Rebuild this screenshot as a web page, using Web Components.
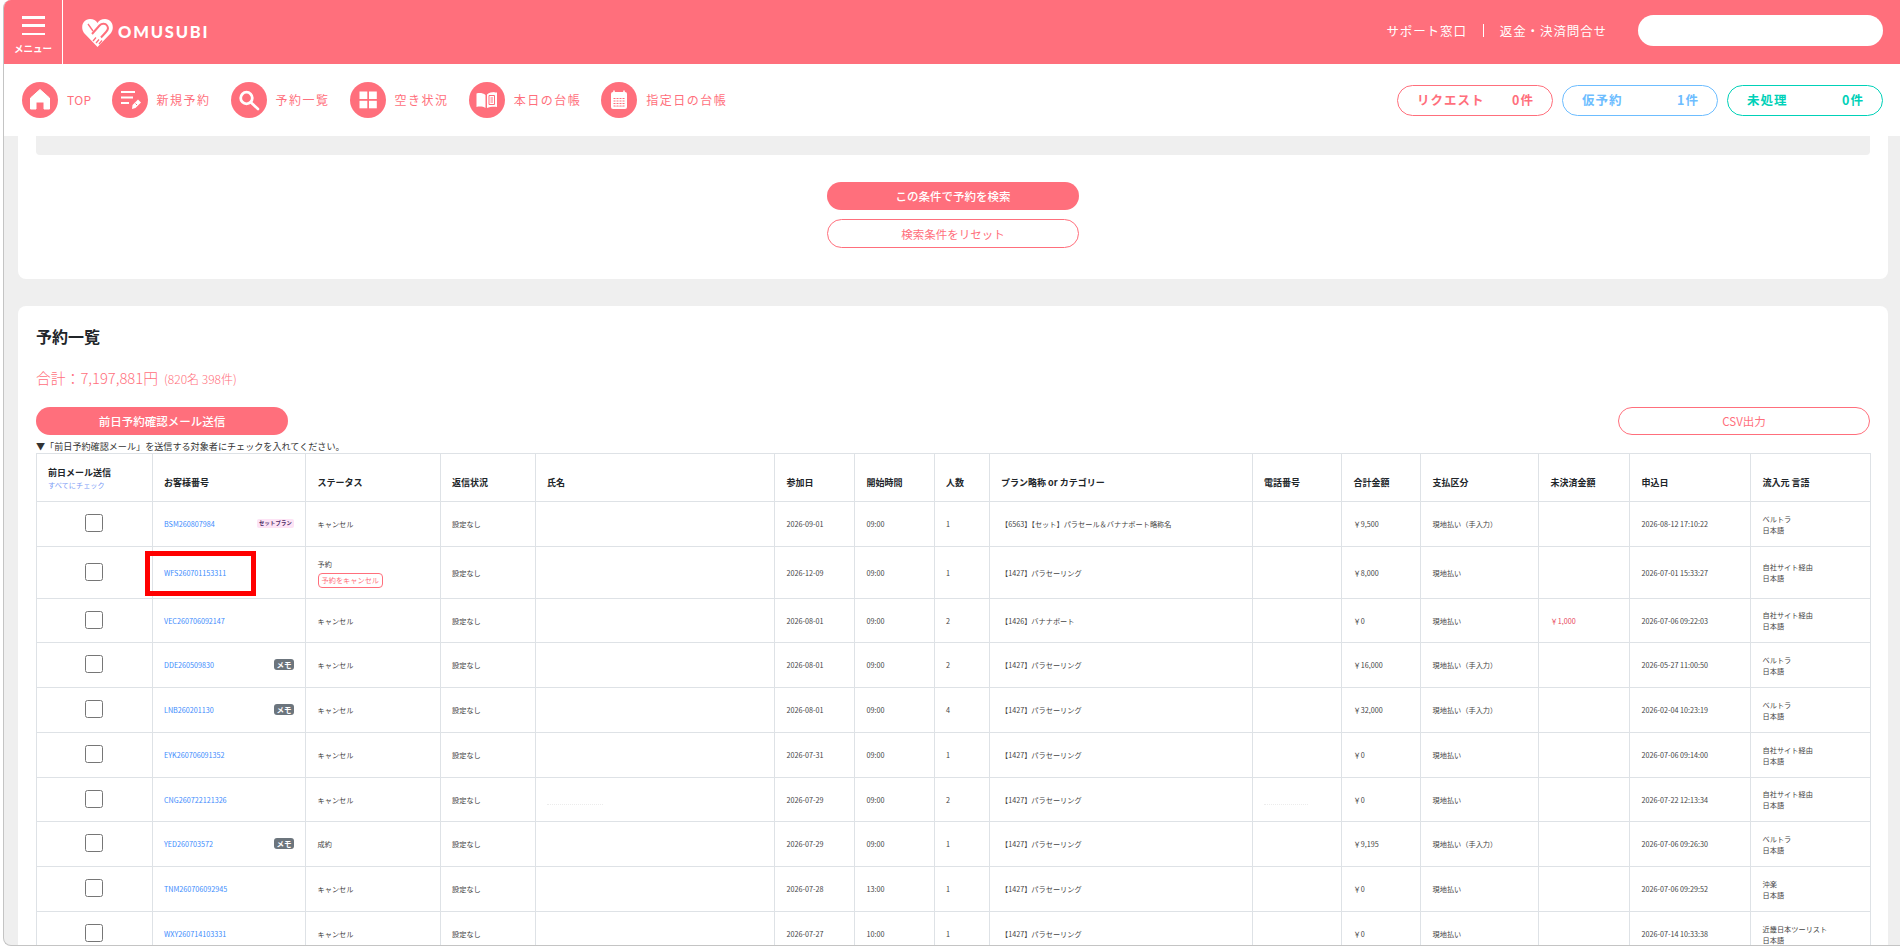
<!DOCTYPE html>
<html lang="ja">
<head>
<meta charset="utf-8">
<title>OMUSUBI</title>
<style>
  html, body { margin: 0; height: 949px; overflow: hidden; background: #fff; }
  body { font-family: "Noto Sans CJK JP", "Noto Sans", sans-serif; color: #212529; }
</style>
</head>
<body>
<app-window>
  <top-bar></top-bar>
  <nav-bar>
    <nav-item label="TOP" icon="home" tight></nav-item>
    <nav-item label="新規予約" icon="new"></nav-item>
    <nav-item label="予約一覧" icon="search"></nav-item>
    <nav-item label="空き状況" icon="grid"></nav-item>
    <nav-item label="本日の台帳" icon="book"></nav-item>
    <nav-item label="指定日の台帳" icon="calendar"></nav-item>
    <status-pill slot="pills" label="リクエスト" count="0件" color="#ff6f7c"></status-pill>
    <status-pill slot="pills" label="仮予約" count="1件" color="#6dbdff"></status-pill>
    <status-pill slot="pills" label="未処理" count="0件" color="#00d1b8"></status-pill>
  </nav-bar>
  <page-body>
    <search-card></search-card>
    <reservation-card></reservation-card>
  </page-body>
</app-window>

<script>
const PINK = '#ff6f7c';

// shorthand, every component here just sets its shadow html once
class Base extends HTMLElement {
  render(html) {
    let root = this.attachShadow({mode: 'open'});
    root.innerHTML = html;
    return root;
  }
}

class AppWindow extends Base {
  constructor() {
    super();
    this.render(`
      <style>
        :host {
          display: flex; flex-direction: column; box-sizing: border-box;
          margin-left: 3px; height: 946px; overflow: hidden;
          border-left: 1px solid #c4c4c4; border-bottom: 1px solid #c4c4c4;
          border-radius: 8px 0 0 8px; background: #efefef;
        }
      </style>
      <slot></slot>`);
  }
}
customElements.define('app-window', AppWindow);

class TopBar extends Base {
  constructor() {
    super();
    this.render(`
      <style>
        :host { display: flex; align-items: center; height: 64px; flex: none; background: ${PINK}; color: #fff; }
        .menu {
          box-sizing: border-box; width: 59px; height: 64px; border-right: 1px solid #fff;
          display: flex; flex-direction: column; align-items: center; padding-top: 16px;
        }
        .bars { width: 23px; height: 19px; display: flex; flex-direction: column; justify-content: space-between; }
        .bars i { display: block; height: 2.500px; background: #fff; }
        .menu b { font-size: 9.500px; line-height: 12px; margin-top: 7px; font-weight: 700; }
        .logo { display: flex; align-items: center; margin-left: 19px; gap: 5px; }
        .logo svg { display: block; }
        .logo span { font: 900 16.500px "Lato", sans-serif; letter-spacing: 1.800px; }
        .links { margin-left: auto; margin-bottom: 3px; display: flex; align-items: center; font-size: 12.500px; letter-spacing: .900px; }
        .links i { width: 1px; height: 13px; background: #fff; margin: 0 16px; }
        .search { width: 245px; height: 31px; border-radius: 16px; background: #fff; margin: 0 17px 3px 31px; }
      </style>
      <div class="menu">
        <div class="bars"><i></i><i></i><i></i></div>
        <b>メニュー</b>
      </div>
      <div class="logo">
        <svg width="31" height="29" viewBox="0 0 31 29">
          <path d="M15.500 29 2 15C-2 9 1 1 8 1c3.500 0 6 1.500 7.500 4C17 2.500 19.500 1 23 1c7 0 10 8 6 14Z" fill="#fff"/>
          <path d="M10 16 17.500 7.500c2.500-2.500 6-2 7.500 0 1.500 2 1 4.500-1 6.500l-5 5.500" fill="none" stroke="${PINK}" stroke-width="2"/>
          <path d="M6 6 11 13M14 25l3-3.500M17 26l3-3.500M11 23l3-3.500" fill="none" stroke="${PINK}" stroke-width="1.300"/>
        </svg>
        <span>OMUSUBI</span>
      </div>
      <div class="links">サポート窓口<i></i>返金・決済問合せ</div>
      <div class="search"></div>`);
  }
}
customElements.define('top-bar', TopBar);

const ICONS = {
  home: `<path d="M18 7.500 27.500 16v11H22v-7h-8v7H8.500V16Z" fill="#fff" stroke="#fff" stroke-width="1" stroke-linejoin="round"/>`,
  new: `<path d="M9 10h14M9 15.500h12M9 21h8" stroke="#fff" stroke-width="2.200" fill="none"/>
        <path d="M20 27l.500-4 5.500-5.500 3 3-5.500 5.500Z" fill="#fff"/>
        <path d="M23.500 21.500l1.500 1.500" stroke="${PINK}" stroke-width="1"/>`,
  search: `<circle cx="15.500" cy="16" r="5.800" fill="none" stroke="#fff" stroke-width="2.800"/>
        <path d="M20 20.500 27 27" stroke="#fff" stroke-width="2.600" stroke-linecap="round"/>`,
  grid: `<rect x="9.500" y="9.500" width="7.800" height="7.500" fill="#fff"/><rect x="19" y="9.500" width="7.800" height="7.500" fill="#fff"/>
        <rect x="9.500" y="18.800" width="7.800" height="7.500" fill="#fff"/><rect x="19" y="18.800" width="7.800" height="7.500" fill="#fff"/>`,
  book: `<path d="M7.500 11.500c3-.800 6.500-.500 9 1.500v13c-2.500-1.500-6-1.800-9-1Z" fill="#fff"/>
        <path d="M18 12.500c2-1.800 5-2.500 7.500-2.500v.500h2.500v14.500c-3.500-.500-7.500 0-10 1Z" fill="#fff"/>
        <path d="M20 13.500h5.500v9H20ZM21.500 16h2.500M21.500 18h2.500M21.500 20h2.500" fill="none" stroke="${PINK}" stroke-width="1"/>`,
  calendar: `<rect x="10" y="10" width="16" height="17" rx="2" fill="#fff"/>
        <path d="M13 8.500v3M23 8.500v3" stroke="#fff" stroke-width="1.600"/>
        <path d="M12.500 16.500h11M12.500 19h11M12.500 21.500h11M12.500 24h11" stroke="${PINK}" stroke-width="1"/>
        <path d="M15 16v8.500M18 16v8.500M21 16v8.500" stroke="#fff" stroke-width="1"/>`
};

class NavBar extends Base {
  constructor() {
    super();
    this.render(`
      <style>
        :host { display: flex; align-items: center; flex: none; height: 72px; background: #fff; padding: 0 17px 0 18px; gap: 20px; }
        .pills { margin-left: auto; display: flex; gap: 9px; }
      </style>
      <slot></slot>
      <div class="pills"><slot name="pills"></slot></div>`);
  }
}
customElements.define('nav-bar', NavBar);

class NavItem extends Base {
  constructor() {
    super();
    let label = this.getAttribute('label');
    let icon = ICONS[this.getAttribute('icon')];
    this.render(`
      <style>
        :host { display: flex; align-items: center; gap: 9px; color: ${PINK}; font-size: 12px; font-weight: 400; letter-spacing: 1.500px; }
        :host([tight]) { letter-spacing: .400px; }
        svg { display: block; flex: none; }
        span { margin-top: -2px; }
      </style>
      <svg width="36" height="36" viewBox="0 0 36 36"><circle cx="18" cy="18" r="18" fill="${PINK}"/>${icon}</svg>
      <span>${label}</span>`);
  }
}
customElements.define('nav-item', NavItem);

class StatusPill extends Base {
  constructor() {
    super();
    let c = this.getAttribute('color');
    this.render(`
      <style>
        :host {
          display: flex; align-items: center; justify-content: space-between; box-sizing: border-box;
          width: 156px; height: 31px; padding: 0 18px 2px 19px; border: 1px solid ${c}; border-radius: 16px;
          color: ${c}; font-size: 12.500px; font-weight: 700; letter-spacing: 1px;
        }
      </style>
      <span>${this.getAttribute('label')}</span><span>${this.getAttribute('count')}</span>`);
  }
}
customElements.define('status-pill', StatusPill);

class PageBody extends Base {
  constructor() {
    super();
    this.render(`
      <style>
        :host { display: flex; flex-direction: column; gap: 27px; flex: 1; min-height: 0; overflow: hidden; padding: 0 12px 0 14px; }
      </style>
      <slot></slot>`);
  }
}
customElements.define('page-body', PageBody);

class PillButton extends Base {
  constructor() {
    super();
    this.render(`
      <style>
        :host {
          display: flex; align-items: center; justify-content: center; box-sizing: border-box;
          width: 252px; height: 28px; border-radius: 15px; font-size: 11.500px;
          background: ${PINK}; color: #fff; font-weight: 500; flex: none;
        }
        :host([outline]) { background: #fff; color: ${PINK}; border: 1px solid ${PINK}; font-weight: 400; }
        :host([tall]) { height: 29px; }
      </style>
      <slot></slot>`);
  }
}
customElements.define('pill-button', PillButton);

class SearchCard extends Base {
  constructor() {
    super();
    this.render(`
      <style>
        :host {
          display: flex; flex-direction: column; align-items: center; flex: none; height: 143px;
          background: #fff; border-radius: 0 0 8px 8px; padding: 0 18px; box-sizing: border-box;
        }
        .panel { align-self: stretch; height: 19px; background: #efefef; border-radius: 0 0 4px 4px; margin-bottom: 27px; }
        pill-button[tall] { margin-top: 9px; }
      </style>
      <div class="panel"></div>
      <pill-button>この条件で予約を検索</pill-button>
      <pill-button outline tall>検索条件をリセット</pill-button>`);
  }
}
customElements.define('search-card', SearchCard);

class ReservationCard extends Base {
  constructor() {
    super();
    this.render(`
      <style>
        :host {
          display: block; flex: none; background: #fff; border-radius: 8px 8px 0 0;
          padding: 18px 18px 0; box-sizing: border-box;
        }
        h2 { margin: 0; font-size: 16px; line-height: 24px; font-weight: 700; color: #212529; }
        .total { margin-top: 18px; line-height: 24px; height: 24px; color: ${PINK}; font-size: 14.800px; font-weight: 300; }
        .total small { font-size: 12px; margin-left: 6px; }
        .actions { margin-top: 17px; display: flex; justify-content: space-between; }
        .note { height: 18px; box-sizing: border-box; padding-top: 5px; font-size: 9.100px; line-height: 13px; color: #333; white-space: nowrap; }
      </style>
      <h2>予約一覧</h2>
      <div class="total">合計：7,197,881円<small>(820名 398件)</small></div>
      <div class="actions">
        <pill-button>前日予約確認メール送信</pill-button>
        <pill-button outline>CSV出力</pill-button>
      </div>
      <div class="note">▼「前日予約確認メール」を送信する対象者にチェックを入れてください。</div>
      <reservation-table></reservation-table>`);
  }
}
customElements.define('reservation-card', ReservationCard);

const COLS = [115.5, 153.5, 134.5, 95, 239.5, 80, 79.5, 55, 263, 89.5, 79, 118, 91, 121, 119.5];
const HEADS = ['お客様番号', 'ステータス', '返信状況', '氏名', '参加日', '開始時間', '人数', 'プラン略称 or カテゴリー', '電話番号', '合計金額', '支払区分', '未決済金額', '申込日', '流入元 言語'];

const PARA = '【1427】パラセーリング';
const CASH = '現地払い';
const MANUAL = '現地払い（手入力）';
const CANCEL = 'キャンセル';
const ROWS = [
  {h: 45, code: 'BSM260807984', badge: 'set', st: CANCEL, day: '2026-09-01', time: '09:00', n: 1, plan: '【6563】【セット】パラセール＆バナナボート略称名', sum: '￥9,500', pay: MANUAL, at: '2026-08-12 17:10:22', from: 'ベルトラ'},
  {h: 52, code: 'WFS260701153311', mark: true, st: '予約', cancel: true, day: '2026-12-09', time: '09:00', n: 1, plan: PARA, sum: '￥8,000', pay: CASH, at: '2026-07-01 15:33:27', from: '自社サイト経由'},
  {h: 44, code: 'VEC260706092147', st: CANCEL, day: '2026-08-01', time: '09:00', n: 2, plan: '【1426】バナナボート', sum: '￥0', pay: CASH, due: '￥1,000', at: '2026-07-06 09:22:03', from: '自社サイト経由'},
  {h: 45, code: 'DDE260509830', badge: 'memo', st: CANCEL, day: '2026-08-01', time: '09:00', n: 2, plan: PARA, sum: '￥16,000', pay: MANUAL, at: '2026-05-27 11:00:50', from: 'ベルトラ'},
  {h: 45, code: 'LNB260201130', badge: 'memo', st: CANCEL, day: '2026-08-01', time: '09:00', n: 4, plan: PARA, sum: '￥32,000', pay: MANUAL, at: '2026-02-04 10:23:19', from: 'ベルトラ'},
  {h: 45, code: 'EYK260706091352', st: CANCEL, day: '2026-07-31', time: '09:00', n: 1, plan: PARA, sum: '￥0', pay: CASH, at: '2026-07-06 09:14:00', from: '自社サイト経由'},
  {h: 44, code: 'CNG260722121326', faint: true, st: CANCEL, day: '2026-07-29', time: '09:00', n: 2, plan: PARA, sum: '￥0', pay: CASH, at: '2026-07-22 12:13:34', from: '自社サイト経由'},
  {h: 45, code: 'YED260703572', badge: 'memo', st: '成約', day: '2026-07-29', time: '09:00', n: 1, plan: PARA, sum: '￥9,195', pay: MANUAL, at: '2026-07-06 09:26:30', from: 'ベルトラ'},
  {h: 45, code: 'TNM260706092945', st: CANCEL, day: '2026-07-28', time: '13:00', n: 1, plan: PARA, sum: '￥0', pay: CASH, at: '2026-07-06 09:29:52', from: '沖楽'},
  {h: 45, code: 'WXY260714103331', st: CANCEL, day: '2026-07-27', time: '10:00', n: 1, plan: PARA, sum: '￥0', pay: CASH, at: '2026-07-14 10:33:38', from: '近畿日本ツーリスト'}
];

class ReservationTable extends Base {
  rowHtml(r) {
    let badge = '';
    if (r.badge == 'set') badge = '<span class="set">セットプラン</span>';
    if (r.badge == 'memo') badge = '<span class="memo">メモ</span>';
    let status = r.st;
    if (r.cancel) status = `<div>${r.st}</div><span class="cancel">予約をキャンセル</span>`;
    let mark = r.mark ? '<div class="mark"></div>' : '';
    let name = r.faint ? '<div class="faint" style="width:56px"></div>' : '';
    let phone = r.faint ? '<div class="faint" style="width:44px"></div>' : '';
    return `<tr style="height:${r.h}px">
      <td class="chk"><input type="checkbox"></td>
      <td class="code">${mark}<div class="codewrap"><a>${r.code}</a>${badge}</div></td>
      <td>${status}</td>
      <td>設定なし</td>
      <td>${name}</td>
      <td>${r.day}</td>
      <td>${r.time}</td>
      <td>${r.n}</td>
      <td>${r.plan}</td>
      <td>${phone}</td>
      <td>${r.sum}</td>
      <td>${r.pay}</td>
      <td class="due">${r.due || ''}</td>
      <td>${r.at}</td>
      <td class="from">${r.from}<br>日本語</td>
    </tr>`;
  }
  constructor() {
    super();
    this.render(`
      <style>
        :host { display: block; }
        table { border-collapse: collapse; table-layout: fixed; width: 1834px; font-size: 7.200px; color: #444; }
        th, td { border: 1px solid #dee2e6; padding: 0 11.500px; text-align: left; vertical-align: middle; white-space: nowrap; line-height: 11px; }
        td { padding-top: 1px; }
        th { font-size: 9px; font-weight: 700; color: #212529; line-height: 13px; padding-top: 9px; }
        th.first { padding: 2px 0 0 11px; }
        thead tr { height: 48px; }
        th small { display: block; font-size: 7.200px; font-weight: 400; color: #7d9cf5; }
        .chk { text-align: center; padding: 0; }
        input { display: block; width: 18px; height: 18px; margin: 0 auto 2px; }
        .code { position: relative; padding-right: 11px; }
        .codewrap { display: flex; align-items: center; justify-content: space-between; }
        a { color: #3d8bfd; }
        .set { background: #fde3f5; color: #4b2a63; font-size: 5.300px; font-weight: 700; line-height: 9px; padding: 0 2px; border-radius: 2px; margin-top: -2px; letter-spacing: .2px; }
        .memo { background: #6c757d; color: #fff; font-size: 7.500px; font-weight: 700; line-height: 11px; padding: 0 2.500px; border-radius: 3px; margin-top: -2px; }
        .cancel { display: inline-block; color: ${PINK}; border: 1px solid ${PINK}; border-radius: 4px; padding: 0 3px; line-height: 13px; margin-top: 3px; }
        .due { color: #e8455a; }
        .mark { position: absolute; left: -8px; top: 4px; width: 111px; height: 45px; box-sizing: border-box; border: 5.500px solid #f00; }
        .faint { margin-top: 8px; height: 0; border-top: 1px dotted #ececec; }
      </style>
      <table>
        <colgroup>${COLS.map(w => `<col style="width:${w}px">`).join('')}</colgroup>
        <thead><tr>
          <th class="first">前日メール送信<small>すべてにチェック</small></th>
          ${HEADS.map(h => `<th>${h}</th>`).join('')}
        </tr></thead>
        <tbody>${ROWS.map(r => this.rowHtml(r)).join('')}</tbody>
      </table>`);
  }
}
customElements.define('reservation-table', ReservationTable);
</script>
</body>
</html>
